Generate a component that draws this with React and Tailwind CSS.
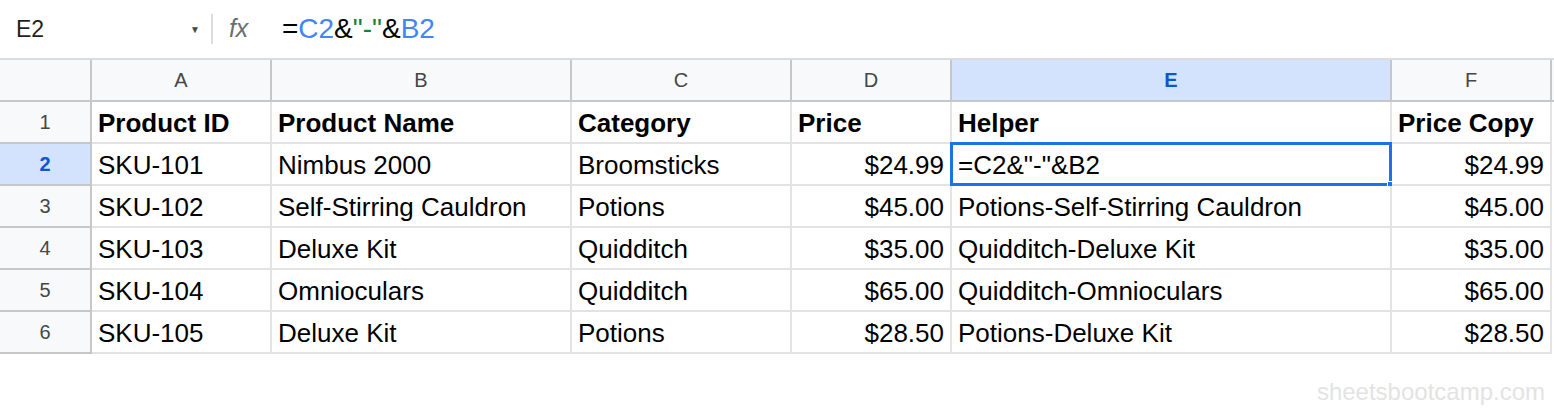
import React from "react";

const cols = ["A", "B", "C", "D", "E", "F"];
const widths = ["w-[180px]", "w-[300px]", "w-[220px]", "w-[160px]", "w-[440px]", "w-[160px]"];

const rows = [
  ["Product ID", "Product Name", "Category", "Price", "Helper", "Price Copy"],
  ["SKU-101", "Nimbus 2000", "Broomsticks", "$24.99", '=C2&"-"&B2', "$24.99"],
  ["SKU-102", "Self-Stirring Cauldron", "Potions", "$45.00", "Potions-Self-Stirring Cauldron", "$45.00"],
  ["SKU-103", "Deluxe Kit", "Quidditch", "$35.00", "Quidditch-Deluxe Kit", "$35.00"],
  ["SKU-104", "Omnioculars", "Quidditch", "$65.00", "Quidditch-Omnioculars", "$65.00"],
  ["SKU-105", "Deluxe Kit", "Potions", "$28.50", "Potions-Deluxe Kit", "$28.50"],
];

const Cell = ({ text, col, row }) => {
  const right = row > 0 && (col === 3 || col === 5);
  const selected = row === 1 && col === 4;
  return (
    <div
      className={`relative flex h-[42px] shrink-0 items-center border-b-2 border-r-2 border-[#e2e3e3] px-[6px] text-[26px] text-black ${widths[col]} ${right ? "justify-end" : ""} ${row === 0 ? "font-bold" : ""}`}
    >
      <span className="whitespace-nowrap pt-[2px]">{text}</span>
      {selected && (
        <div className="absolute -left-[2px] -top-[2px] h-[44px] w-[442px] border-[3px] border-[#1a73e8]">
          <div className="absolute -bottom-[4px] -right-[4px] h-[6px] w-[6px] border border-white bg-[#1a73e8]" />
        </div>
      )}
    </div>
  );
};

export default function App() {
  return (
    <div className="relative h-[414px] w-[1554px] overflow-hidden bg-white font-['Liberation_Sans',Arial,sans-serif]">
      {/* formula bar */}
      <div className="flex h-[58px] items-center">
        <div className="w-[190px] pl-[16px] text-[23px] text-[#1f1f1f]">E2</div>
        <span className="text-[10px] text-[#444746]">▼</span>
        <div className="ml-[11px] h-[30px] w-[2px] bg-[#dadce0]" />
        <div className="ml-[16px] w-[53px] text-[25px] italic text-[#6b6e72]">fx</div>
        <div className="text-[28px] text-black">
          =<span className="text-[#4285f4]">C2</span>&amp;<span className="text-[#188038]">"-"</span>&amp;<span className="text-[#4285f4]">B2</span>
        </div>
      </div>

      {/* column headers */}
      <div className="flex border-t-2 border-[#dadce0]">
        <div className="h-[42px] w-[92px] shrink-0 border-b-2 border-r-2 border-[#c7c7c7] bg-[#f8f9fa]" />
        {cols.map((c, i) => (
          <div
            key={c}
            className={`flex h-[42px] shrink-0 items-center justify-center border-b-2 border-r-2 border-[#c7c7c7] text-[20px] ${widths[i]} ${c === "E" ? "bg-[#d3e3fd] font-bold text-[#0b57d0]" : "bg-[#f8f9fa] text-[#444746]"}`}
          >
            {c}
          </div>
        ))}
        <div className="h-[42px] w-[2px] shrink-0 border-b-2 border-[#c7c7c7] bg-[#f8f9fa]" />
      </div>

      {/* rows */}
      {rows.map((r, ri) => (
        <div key={ri} className="flex">
          <div
            className={`flex h-[42px] w-[92px] shrink-0 items-center justify-center border-b-2 border-r-2 border-[#c7c7c7] text-[20px] ${ri === 1 ? "bg-[#d3e3fd] font-bold text-[#0b57d0]" : "bg-[#f8f9fa] text-[#444746]"}`}
          >
            {ri + 1}
          </div>
          {r.map((t, ci) => (
            <Cell key={ci} text={t} col={ci} row={ri} />
          ))}
        </div>
      ))}

      <div className="flex justify-end pr-[9px] pt-[20px] text-[24px] text-[#e3e3e3]">sheetsbootcamp.com</div>
    </div>
  );
}
